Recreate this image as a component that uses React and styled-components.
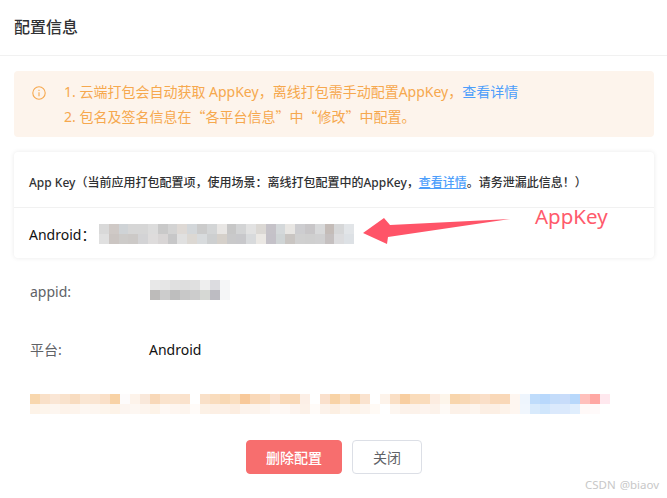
import React from "react";
import styled, { createGlobalStyle } from "styled-components";

const Global = createGlobalStyle`
  html, body { margin: 0; padding: 0; background: #fff; }
  body { font-family: "Noto Sans", "Noto Sans CJK SC", sans-serif; }
  * { box-sizing: border-box; }
`;

const Page = styled.div`
  position: relative;
  width: 667px;
  height: 498px;
  overflow: hidden;
  background: #fff;
`;
const Header = styled.header`
  height: 56px;
  padding-left: 14px;
  display: flex;
  align-items: center;
  border-bottom: 1px solid #f1f1f1;
  padding-bottom: 3px;
`;
const Title = styled.h1`
  margin: 0;
  font-size: 16px;
  font-weight: 500;
  color: #303133;
`;
const Body = styled.main`
  padding: 15px 13px 0 14px;
`;
const Alert = styled.section`
  height: 66px;
  background: #fdf4ec;
  border-radius: 4px;
  display: flex;
  align-items: flex-start;
  padding: 8px 0 0 18px;
  color: #f6a84e;
  font-size: 14px;
  line-height: 25px;
`;
const AlertIcon = styled.svg`
  width: 14px;
  height: 14px;
  margin: 7px 18px 0 0;
  flex: none;
`;
const Quote = styled.span`
  font-family: "Noto Sans CJK SC", sans-serif;
`;
const Link = styled.a`
  color: #4d9efb;
  text-decoration: ${(p) => (p.$underline ? "underline" : "none")};
`;
const Card = styled.section`
  margin-top: 15px;
  height: 106px;
  border-radius: 4px;
  background: #fff;
  box-shadow: 0 0 5px rgba(0, 0, 0, 0.09);
`;
const CardHead = styled.div`
  height: 56px;
  padding: 5px 0 0 15px;
  display: flex;
  align-items: center;
  border-bottom: 1px solid #f1f1f1;
  font-size: 12px;
  font-weight: 500;
  color: #303133;
  white-space: nowrap;
`;
const CardRow = styled.div`
  height: 50px;
  padding: 2px 0 0 15px;
  display: flex;
  align-items: center;
  font-size: 14px;
  color: #111;
`;
const Mosaic = styled.svg`
  display: block;
  flex: none;
`;
const AndroidLabel = styled.span`
  width: 70px;
`;
const InfoRow = styled.div`
  padding-left: 16px;
  display: flex;
  align-items: center;
  height: 20px;
  margin-top: ${(p) => p.$top}px;
  font-size: 14px;
`;
const Label = styled.span`
  width: 120px;
  padding-top: 2px;
  margin-right: ${(p) => p.$gap || 0}px;
  color: #606266;
`;
const Value = styled.span`
  padding-top: 2px;
  color: #111;
`;
const Footer = styled.div`
  margin-top: 26px;
  display: flex;
  justify-content: center;
  gap: 10px;
`;
const Button = styled.button`
  height: 34px;
  padding: 0;
  width: ${(p) => p.$w}px;
  font: inherit;
  font-size: 14px;
  font-weight: ${(p) => (p.$danger ? 500 : 400)};
  border-radius: 4px;
  border: 1px solid ${(p) => (p.$danger ? "#f76e6e" : "#dcdfe6")};
  background: ${(p) => (p.$danger ? "#f76e6e" : "#fff")};
  color: ${(p) => (p.$danger ? "#fff" : "#606266")};
`;
const Arrow = styled.svg`
  position: absolute;
  left: 360px;
  top: 215px;
`;
const Note = styled.div`
  position: absolute;
  left: 535px;
  top: 202px;
  font-size: 20.5px;
  line-height: 28px;
  color: #ff5a6c;
`;
const Watermark = styled.div`
  position: absolute;
  left: 585px;
  top: 477px;
  font-size: 11.5px;
  line-height: 16px;
  word-spacing: 1px;
  color: #c8c8c8;
  white-space: nowrap;
`;

const Blocks = ({ rows, cell = 10 }) => (
  <Mosaic width={rows[0].length * cell} height={rows.length * 10} shapeRendering="crispEdges">
    {rows.map((row, y) =>
      row.map((c, x) => <rect key={`${x}-${y}`} x={x * cell} y={y * 10} width={cell + 0.5} height={10} fill={`#${c}`} />)
    )}
  </Mosaic>
);
const split = (s) => s.trim().split(/\s+/);

const androidKey = [
  split("d9d9d9 cfc9c6 cfd3d6 d6d6d6 d6d6d6 dcdcdc c9c9c9 d3d3d3 ded9d5 d3d7da cbcbcb d3d5d6 e8e6e4 c7c7c7 d3d4d5 e2e2e2 dbd8d4 c5c2c8 d4d8da e8e6e3 cdcdd0 c8c6c8 d8d9da c4bcb8 d6d7d8 e2e5e8"),
  split("e0e0e0 cbc5c2 cdcbc9 ccc9c7 d3d3d5 dedcdc d8d5d5 c7c7c8 e0e0e0 dcd8d3 d8dbdd cdcfd0 d5d0ca c9c9ca c8c8cb d8dadc ebe8e4 c4c1c8 cfd4d5 c9c5c2 d0d0d0 cfcfcf d0d0d1 c5c0c0 dcdcde dde1e5"),
];
const appId = [
  split("e8e8e8 e6e6e6 e0e0e0 dedede e0e0e0 eeeeee dcdce0 f5f6f7"),
  split("bdbbba cccccc bebebe c8c8c8 cccccc d6d8d4 bdbcc2 f5f6f7"),
];
const extra = [
  split("f8d7ae f9e0c8 fae6d5 f9e2cc f8dcc0 fae6d3 fae5d2 fae0c8 f8d2a5 fdfbfb fdf3ea f9e8da f8d8b8 fae3cd fae4cf fae2cc ffffff f9e0c8 f9dcbd f8d8b4 fadebf f8c99a f9d8b8 f9dab9 fae2cf f9d9b8 f9d9b8 fcefe6 ffffff fae0cc f8d3a6 fadfc5 f8d3a8 fae3cf ffffff fdf3ea fadfc5 f8cea0 fadcbb fadcbc fcece0 fdf5ea f8d5ac f8d8b5 f9dcc0 fadfc8 f9d8b8 f9d8b8 fef6f0 eef5fd bfdcfb b8d8fc c4dcfa c8dcfa b8d8fb ffc0bc ffa8a4 ffe8ee"),
  split("fdf3e8 fdf5ec fdf6f0 fdf3ea fdf4ec fdf7f2 fdf6f0 fdf5ec fdf3e8 fcf5f0 fdf7f2 fdf5ee fdf3e8 fef8f4 fef6f0 fdf5ee fffbf8 fcf1e6 fcefe4 fcf0e6 fcede0 fcf3ec fcf3ec fdf5ee fef9f6 fef8f4 fdf4ee fcf1e8 fffbf8 fcf2ea fcefe2 fdf5ee fdf3e8 fdf5ee fffaf5 ffffff fdf6f0 fcf2ea fcf2ea fdf4ee fcf2ea fefaf6 fcf1e8 fcf2ea fdf5ee fcefe4 fcefe4 fdf3ea fef6f0 f0f6fd d8eafc d0e6fc dbe9fc dbe9fc e0eefd fff9f8 fffafa ffffff"),
];

export default function App() {
  return (
    <Page>
      <Global />
      <Header>
        <Title>配置信息</Title>
      </Header>
      <Body>
        <Alert>
          <AlertIcon viewBox="0 0 14 14" fill="none" stroke="#f6a84e" strokeWidth="1.1">
            <circle cx="7" cy="7" r="6.2" />
            <path d="M7 6.2v4M7 3.8v1.2" />
          </AlertIcon>
          <div>
            <div>
              1. 云端打包会自动获取 AppKey，离线打包需手动配置AppKey，<Link>查看详情</Link>
            </div>
            <div>
              2. 包名及签名信息在<Quote>“</Quote>各平台信息<Quote>”</Quote>中<Quote>“</Quote>修改<Quote>”</Quote>中配置。
            </div>
          </div>
        </Alert>
        <Card>
          <CardHead>
            <span>
              App Key（当前应用打包配置项，使用场景：离线打包配置中的AppKey，
              <Link $underline>查看详情</Link>。请务泄漏此信息！）
            </span>
          </CardHead>
          <CardRow>
            <AndroidLabel>Android：</AndroidLabel>
            <Blocks rows={androidKey} cell={9.81} />
          </CardRow>
        </Card>
        <InfoRow $top={22}>
          <Label>appid:</Label>
          <Blocks rows={appId} />
        </InfoRow>
        <InfoRow $top={38}>
          <Label $gap={-1}>平台:</Label>
          <Value>Android</Value>
        </InfoRow>
        <InfoRow $top={36}>
          <Blocks rows={extra} />
        </InfoRow>
        <Footer>
          <Button $danger $w={96}>删除配置</Button>
          <Button $w={70}>关闭</Button>
        </Footer>
      </Body>
      <Arrow width="155" height="32" viewBox="360 215 155 32" fill="#ff5468">
        <path d="M363 233 L384 218 L390 225 L510 219 L388 237 L387 244 Z" />
      </Arrow>
      <Note>AppKey</Note>
      <Watermark>CSDN @biaov</Watermark>
    </Page>
  );
}
